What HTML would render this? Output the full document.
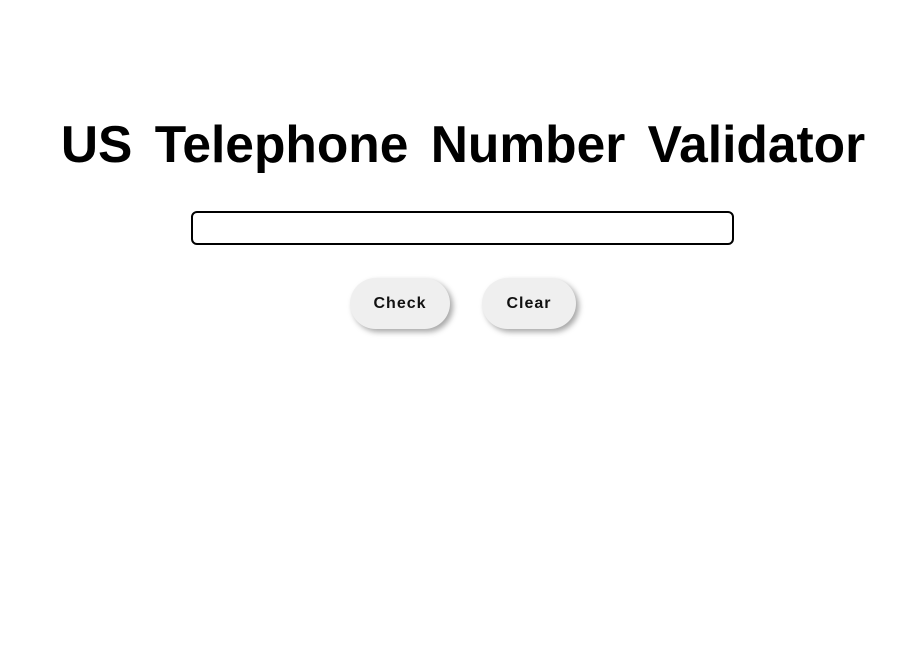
<!DOCTYPE html>
<html><head><style>
body{margin:0;background:#fff;width:908px;height:671px;overflow:hidden;font-family:"Liberation Sans",sans-serif;}
h1{position:absolute;left:9px;width:908px;top:112px;margin:0;text-align:center;font-size:51.5px;font-weight:bold;line-height:64px;word-spacing:8px;color:#000;}
.inp{position:absolute;left:191px;top:211px;width:539px;height:30px;border:2px solid #000;border-radius:6px;}
.btn{position:absolute;top:278px;height:51px;border-radius:26px;background:#efefef;box-shadow:3px 3px 6px rgba(0,0,0,.35);font-size:16px;font-weight:bold;letter-spacing:1px;line-height:51px;text-align:center;color:#111;}
</style></head><body>
<h1>US Telephone Number Validator</h1>
<div class="inp"></div>
<div class="btn" style="left:350px;width:100px">Check</div>
<div class="btn" style="left:482px;width:94px">Clear</div>
</body></html>
